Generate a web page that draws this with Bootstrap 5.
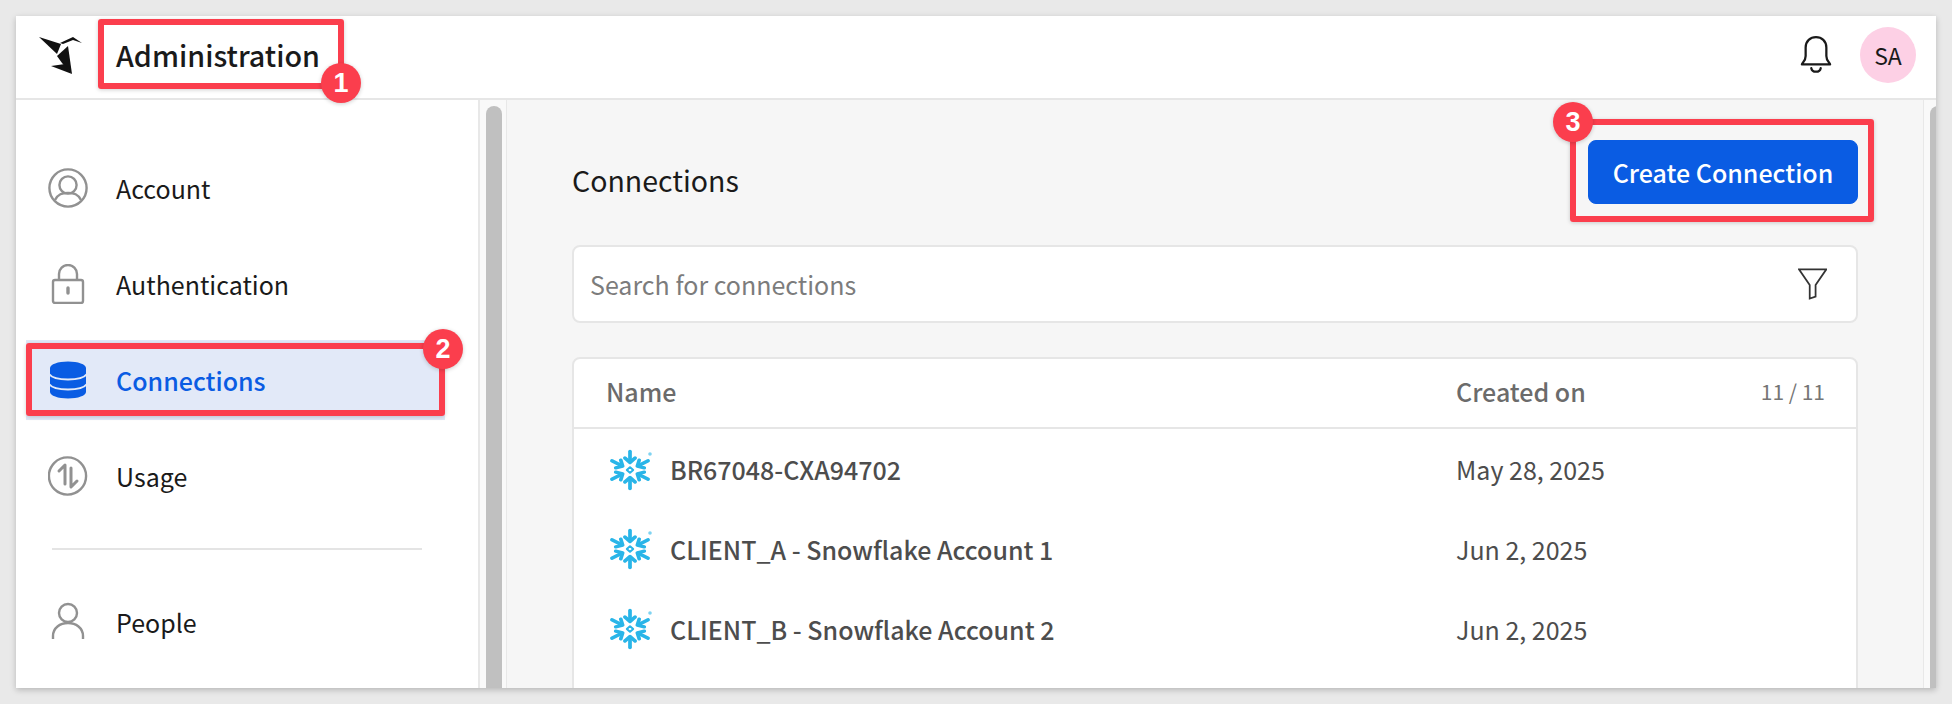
<!DOCTYPE html>
<html lang="en">
<head>
<meta charset="utf-8">
<title>Administration</title>
<link href="https://cdn.jsdelivr.net/npm/bootstrap@5.3.0/dist/css/bootstrap.min.css" rel="stylesheet">
<style>
html,body{height:100%}
body{background:#e9e9e9;padding:16px;overflow:hidden;font-family:"Noto Sans CJK SC","Noto Sans",sans-serif;color:#1a1a1a}
.app-window{position:relative;height:672px;background:#fff;overflow:hidden;box-shadow:0 2px 6px rgba(0,0,0,.22)}
.app-header{height:84px;border-bottom:2px solid #e6e6e6;padding:0 20px 4px 23px}
.app-title{font-size:28.700px;font-weight:500;line-height:1;margin:0 0 0 34px;color:#1a1a1a}
.app-avatar{width:56px;height:56px;background:#fdd0e5;font-size:23px;margin-left:28px}
.app-body{height:588px}
.app-side{width:464px;flex:none;border-right:2px solid #e8e8e8;padding-top:48px}
.app-link{height:80px;margin:0 33px 16px 10px;padding-left:22px;font-size:25px;line-height:1;color:#1a1a1a;gap:28px;text-decoration:none}
.app-link svg{width:40px;height:40px;flex:none}
.app-link.is-active{background:#e2e9f8;color:#0a5ce3;font-weight:500}
.app-rule{margin:32px 23px 32px 36px;width:370px;border:0;border-top:2px solid #e4e4e4;opacity:1}
.app-track{width:27px;flex:none;background:#f9f9f9;border-right:1px solid #e8e8e8;padding:6px 0 0 6px}
.app-track.at-end{width:13px;border:0;border-left:1px solid #e8e8e8}
.app-thumb{width:16px;height:100%;flex:none;border-radius:8px 8px 0 0;background:#c0c0c0}
.app-main{background:#f6f6f6;padding:40px 65px 0;min-width:0;overflow:hidden}
.app-heading{font-size:28.500px;font-weight:400;line-height:1;margin:0 0 10px}
.app-create{--bs-btn-bg:#0a5ce3;--bs-btn-border-color:#0a5ce3;width:270px;height:64px;font-size:25px;font-weight:500;line-height:1;border-radius:8px;padding:0}
.app-search{margin-top:41px;height:78px;background:#fff;border:2px solid #e6e6e6;border-radius:8px;padding:0 29px 0 16px}
.app-search input{font-size:25px;color:#1a1a1a;padding:2px 0 0;border:0;box-shadow:none;background:transparent}
.app-search input::placeholder{color:#7c7c7c}
.app-card{margin-top:34px;background:#fff;border:2px solid #e6e6e6;border-radius:8px 8px 0 0;overflow:hidden}
.app-table{table-layout:fixed;margin:0;--bs-table-bg:transparent}
.app-table th{height:69px;font-size:25px;font-weight:500;color:#6b6b6b;border-bottom:2px solid #e6e6e6;padding:0 0 3px 32px;vertical-align:middle;line-height:1}
.app-table th + th{padding-left:0}
.app-table .app-count{font-size:21px;font-weight:400;color:#757575;text-align:right;padding-right:31px;width:150px}
.app-table td{height:80px;font-size:25px;color:#4d4d4d;border:0;padding:2px 0 0;vertical-align:middle;line-height:1}
.app-table td:first-child{padding-left:35px;font-weight:500}
.app-table td svg{width:44px;height:42px;margin-right:17px;flex:none}
.app-mark{position:absolute;border:6px solid #fb3e4d;border-radius:3px;box-shadow:0 1px 4px rgba(0,0,0,.18)}
.app-pin{position:absolute;width:40px;height:40px;border-radius:50%;background:#fb3e4d;color:#fff;font-family:"Liberation Sans",sans-serif;font-weight:700;font-size:27px;line-height:40px;text-align:center;box-shadow:0 1px 4px rgba(0,0,0,.2)}
</style>
</head>
<body>
<svg width="0" height="0" class="d-block">
  <defs>
    <symbol id="flake" viewBox="0 0 44 42">
      <g transform="translate(21 21) scale(1.130 1) translate(-21 -21)" fill="none" stroke="#29b5e8" stroke-width="3.300" stroke-linecap="round" stroke-linejoin="round">
        <g id="arm"><path d="M21 2.500v10"/><path d="M16.500 9l4.500 4.500 4.500-4.500"/></g>
        <use href="#arm" transform="rotate(60 21 21)"/>
        <use href="#arm" transform="rotate(120 21 21)"/>
        <use href="#arm" transform="rotate(180 21 21)"/>
        <use href="#arm" transform="rotate(240 21 21)"/>
        <use href="#arm" transform="rotate(300 21 21)"/>
        <path d="M21 18.200l2.800 2.800-2.800 2.800-2.800-2.800z" stroke-width="1.800"/>
      </g>
      <circle cx="41" cy="5" r="1.800" fill="#7fd3f1"/>
    </symbol>
  </defs>
</svg>
<div class="app-window d-flex flex-column">
  <header class="app-header d-flex align-items-center">
    <svg width="43" height="37" viewBox="0 0 43 37">
      <path fill="#111" d="M0 0l22 7-4 10z"/>
      <path fill="#111" d="M21 6L34 0l9 6-9-3-10 4z"/>
      <path fill="#111" d="M29 9L18 19l5 7 10 11z"/>
      <path fill="#111" d="M12 29l14-2 7 10z"/>
    </svg>
    <h1 class="app-title">Administration</h1>
    <div class="ms-auto d-flex align-items-center">
      <svg width="32" height="40" viewBox="0 0 34 42" fill="none" stroke="#1a1a1a" stroke-width="2.400" stroke-linejoin="round" stroke-linecap="round"><path d="M2 31c0-2 4-3 4-9V13C6 6 11 2 17 2s11 4 11 11v9c0 6 4 7 4 9z"/><path d="M12 35c1 5 9 5 10 0"/></svg>
      <div class="app-avatar rounded-circle d-flex align-items-center justify-content-center">SA</div>
    </div>
  </header>
  <div class="app-body d-flex">
    <nav class="app-side">
      <a href="#" class="app-link d-flex align-items-center">
        <svg viewBox="0 0 40 40" fill="none" stroke="#919191" stroke-width="2.400"><circle cx="20" cy="20" r="18.600"/><circle cx="20" cy="17" r="8.600"/><path d="M7 32c3-6 7-7 13-7s10 1 13 7"/></svg>Account</a>
      <a href="#" class="app-link d-flex align-items-center">
        <svg viewBox="0 0 40 40" fill="none" stroke="#919191" stroke-width="2.400"><rect x="5" y="16" width="30" height="23" rx="2"/><path d="M11 16V10a9 9 0 0 1 18 0v6"/><path d="M20 24v5" stroke-width="3.400" stroke-linecap="round"/></svg>Authentication</a>
      <a href="#" class="app-link is-active d-flex align-items-center">
        <svg viewBox="0 0 40 40"><path fill="#0a5ce3" d="M2 8c0-3.600 8-6.500 18-6.500S38 4.400 38 8v24c0 3.600-8 6.500-18 6.500S2 35.600 2 32z"/><path fill="none" stroke="#e2e9f8" stroke-width="2" d="M1 14c3 4 10 5.500 19 5.500S36 18 39 14M1 24c3 4 10 5.500 19 5.500S36 28 39 24"/></svg>Connections</a>
      <a href="#" class="app-link d-flex align-items-center">
        <svg viewBox="0 0 40 40" fill="none" stroke="#919191" stroke-width="2.400"><circle cx="19.500" cy="20" r="18.600"/><g stroke-width="3" stroke-linecap="round" stroke-linejoin="round"><path d="M11 15l6-6v19"/><path d="M29 25l-6 6V12"/></g></svg>Usage</a>
      <hr class="app-rule">
      <a href="#" class="app-link d-flex align-items-center">
        <svg viewBox="0 0 40 40" fill="none" stroke="#919191" stroke-width="2.400"><circle cx="20" cy="11" r="9"/><path d="M5 37v-3c0-8 7-13 15-13s15 5 15 13v3"/></svg>People</a>
    </nav>
    <div class="app-track"><div class="app-thumb"></div></div>
    <main class="app-main flex-grow-1">
      <div class="d-flex justify-content-between align-items-end">
        <h2 class="app-heading">Connections</h2>
        <button type="button" class="btn btn-primary app-create">Create Connection</button>
      </div>
      <div class="app-search d-flex align-items-center">
        <input class="form-control" type="text" placeholder="Search for connections" aria-label="Search for connections">
        <svg width="30" height="32" viewBox="0 0 30 32" fill="none" stroke="#333" stroke-width="1.800"><path d="M1 1h28L18 17v12l-6 2V17z"/></svg>
      </div>
      <div class="app-card">
        <table class="table app-table">
          <thead><tr><th style="width:882px">Name</th><th>Created on</th><th class="app-count">11 / 11</th></tr></thead>
          <tbody>
            <tr><td><div class="d-flex align-items-center"><svg><use href="#flake"/></svg>BR67048-CXA94702</div></td><td colspan="2">May 28, 2025</td></tr>
            <tr><td><div class="d-flex align-items-center"><svg><use href="#flake"/></svg>CLIENT_A - Snowflake Account 1</div></td><td colspan="2">Jun 2, 2025</td></tr>
            <tr><td><div class="d-flex align-items-center"><svg><use href="#flake"/></svg>CLIENT_B - Snowflake Account 2</div></td><td colspan="2">Jun 2, 2025</td></tr>
            <tr><td></td><td colspan="2"></td></tr>
          </tbody>
        </table>
      </div>
    </main>
    <div class="app-track at-end d-flex"><div class="app-thumb"></div></div>
  </div>
  <div class="app-mark" style="left:82px;top:3px;width:246px;height:70px"></div>
  <div class="app-pin" style="left:305px;top:47px">1</div>
  <div class="app-mark" style="left:10px;top:327px;width:419px;height:73px"></div>
  <div class="app-pin" style="left:407px;top:313px">2</div>
  <div class="app-mark" style="left:1554px;top:103px;width:304px;height:103px"></div>
  <div class="app-pin" style="left:1537px;top:86px">3</div>
</div>
<script src="https://cdn.jsdelivr.net/npm/bootstrap@5.3.0/dist/js/bootstrap.bundle.min.js"></script>
</body>
</html>
